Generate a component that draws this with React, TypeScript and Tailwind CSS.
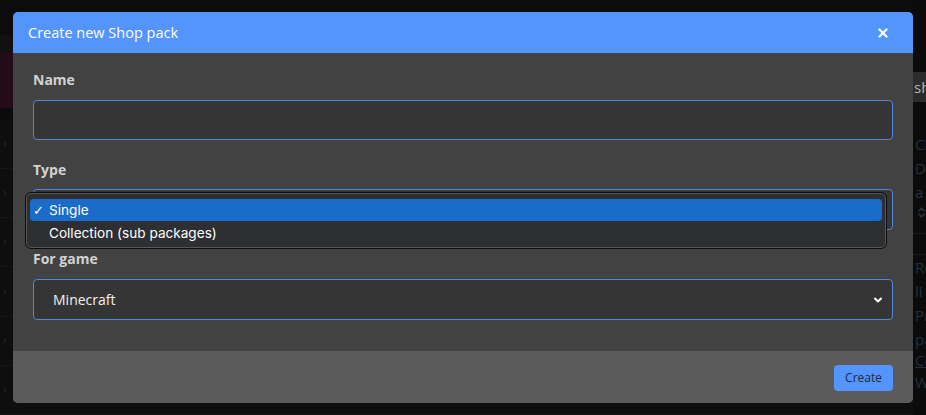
import { ChevronDown, ChevronRight, ChevronsUpDown, X } from "lucide-react";

const sideRows = [0, 1, 2, 3, 4, 5];

function Backdrop() {
  return (
    <div className="flex h-full w-full">
      {/* left side of the page, mostly covered by the modal */}
      <div className="flex w-[913px] flex-col">
        <div className="h-[36px] bg-[#0c0c0c]" />
        <div className="h-[17px] bg-[#111]" />
        <div className="h-[57px] w-[300px] bg-[#250a18]" />
        <div className="h-[12px]" />
        {sideRows.map((r) => (
          <div
            key={r}
            className="flex h-[50px] items-center border-b border-[#151515] bg-[#0e0e0e] pl-[1px] text-[#3a3a3a]"
          >
            <ChevronRight size={8} />
          </div>
        ))}
      </div>

      {/* right column, only its first letters show */}
      <div className="flex flex-1 flex-col overflow-hidden whitespace-nowrap font-['Open_Sans',sans-serif] text-[15px] text-[#25323b]">
        <div className="h-[72px]" />
        <div className="flex h-[30px] items-center bg-[#2c2c2c] pl-[1px] text-[#b5b5b5]">sh</div>
        <div className="h-[30px]" />
        <div className="flex flex-col pl-[2px] leading-[24px]">
          <span>Cl</span>
          <span>D</span>
          <span>a</span>
          <span className="pt-[2px]">
            <ChevronsUpDown size={13} strokeWidth={3} />
          </span>
        </div>
        <div className="mt-[14px] h-[22px] border-y border-[#141b20]" />
        <div className="flex flex-col pl-[2px] leading-[24px]">
          <span>Re</span>
          <span>li</span>
          <span>Pr</span>
          <span>pa</span>
          <span className="leading-[19px] underline">Co</span>
          <span>W</span>
        </div>
      </div>
    </div>
  );
}

export default function App() {
  return (
    <div className="relative h-[415px] w-[926px] overflow-hidden bg-[#0b0b0b] font-['Open_Sans',sans-serif]">
      <Backdrop />

      {/* modal */}
      <div className="absolute left-[13px] top-[12px] w-[900px] overflow-hidden rounded-[5px] bg-[#424242]">
        <div className="flex h-[41px] items-center justify-between bg-[#5394fd] pl-[15px] pr-[23px]">
          <span className="text-[14.5px] text-white">Create new Shop pack</span>
          <X size={14} strokeWidth={4} className="text-white" />
        </div>

        <div className="flex flex-col px-5 pb-[31px] pt-[17px]">
          <label className="text-[14px] font-bold leading-[20px] text-[#d2d2d2]">Name</label>
          <div className="mt-[10px] h-[40px] rounded-[4px] border border-[#5288d6] bg-[#353535]" />

          <label className="mt-[20px] text-[14px] font-bold leading-[20px] text-[#d2d2d2]">Type</label>
          <div className="relative mt-[9px] flex h-[41px] items-center justify-end rounded-[4px] border border-[#5288d6] bg-[#353535] pr-[8px]">
            <ChevronDown size={12} strokeWidth={4} className="text-white" />

            {/* open native list */}
            <div className="absolute left-[-9px] top-[2px] flex h-[57px] w-[862px] flex-col rounded-[6px] border border-[#0d0d0d] bg-[#2e2f33] px-[4px] pt-[6px] font-['Inter',sans-serif] text-[13.6px] text-white shadow-[inset_0_0_0_1px_#56575b]">
              <div className="flex h-[22px] items-center rounded-[4px] bg-[#1b6bc8] pl-[3px]">
                <span className="w-[16px] font-['DejaVu_Sans',sans-serif] text-[13px] leading-none">✓</span>
                <span>Single</span>
              </div>
              <div className="flex h-[24px] items-center pl-[19px]">Collection (sub packages)</div>
            </div>
          </div>

          <label className="mt-[19px] text-[14px] font-bold leading-[20px] text-[#d2d2d2]">For game</label>
          <div className="mt-[10px] flex h-[41px] items-center justify-between rounded-[4px] border border-[#5288d6] bg-[#353535] pl-[19px] pr-[8px]">
            <span className="text-[14px] text-[#f0f0f0]">Minecraft</span>
            <ChevronDown size={12} strokeWidth={4} className="text-white" />
          </div>
        </div>

        <div className="flex h-[52px] items-center justify-end bg-[#5b5b5b] px-5">
          <button className="mt-[1px] h-[26px] rounded-[4px] bg-[#5394fd] px-[11px] text-[12px] text-[#1c2a42]">
            Create
          </button>
        </div>
      </div>
    </div>
  );
}
